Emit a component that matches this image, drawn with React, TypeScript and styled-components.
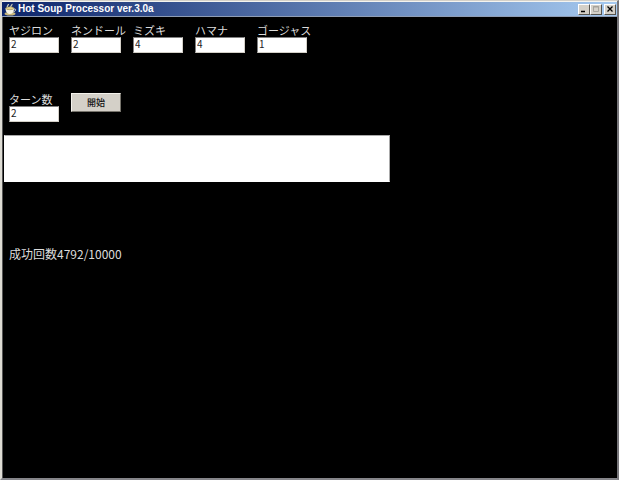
import React, { useState } from "react";
import styled, { createGlobalStyle } from "styled-components";

const GlobalStyle = createGlobalStyle`
  * { box-sizing: border-box; }
  body { margin: 0; background: #000; }
  button, input, textarea { font-family: inherit; margin: 0; }
`;

const Frame = styled.div`
  min-height: 100vh;
  display: flex;
  flex-direction: column;
  background: #000;
  border-style: solid;
  border-width: 1px 2px 2px 2px;
  border-color: #d4d0c8 #77767a #85858a #dedcd4;
  font-family: "Noto Sans CJK JP", "Liberation Sans", sans-serif;
  color: #dcdcdc;
`;

const TitleBar = styled.header`
  display: flex;
  align-items: center;
  height: 16px;
  padding: 0 1px 0 2px;
  gap: 1px;
  border-top: 1px solid #f4f4f0;
  border-bottom: 1px solid #8f9db4;
  background: linear-gradient(to right, #0c246a, #a6caf0);
`;

const Title = styled.h1`
  flex: 1;
  margin: 0;
  color: #fff;
  font: bold 10px/14px "Liberation Sans", sans-serif;
  white-space: nowrap;
`;

const Controls = styled.div`
  display: flex;
`;

const ControlButton = styled.button<{ $apart?: boolean }>`
  display: grid;
  place-items: center;
  width: 12px;
  height: 11px;
  padding: 0;
  margin-left: ${(p) => (p.$apart ? 2 : 0)}px;
  border: 1px solid;
  border-color: #fff #55534e #55534e #fff;
  background: #d4d0c8;
`;

const Body = styled.main`
  flex: 1;
  display: flex;
  flex-direction: column;
  align-items: flex-start;
  border-left: 1px solid #555;
`;

const Row = styled.div<{ $top: number }>`
  display: flex;
  align-items: flex-start;
  gap: 12px;
  padding: ${(p) => p.$top}px 6px 0;
`;

const Field = styled.label`
  display: flex;
  flex-direction: column;
  width: 50px;
  font-size: 11px;
  line-height: 13px;
  white-space: nowrap;
`;

const NumberBox = styled.input`
  width: 100%;
  height: 16px;
  padding: 0 0 3px 1px;
  border: 1px solid;
  border-color: #808080 #d4d0c8 #d4d0c8 #808080;
  background: #fff;
  color: #222;
  font-size: 10px;
  line-height: 11px;
  outline: none;
`;

const StartButton = styled.button`
  width: 50px;
  height: 19px;
  padding: 0;
  border: 1px solid;
  border-color: #f4f2ec #77746c #77746c #f4f2ec;
  background: #d4d0c8;
  color: #111;
  font-size: 9px;
  font-weight: 500;
  line-height: 15px;
`;

const Output = styled.textarea`
  display: block;
  width: 386px;
  max-width: 100%;
  height: 47px;
  margin: 13px 0 0 1px;
  padding: 2px;
  border: 1px solid;
  border-color: #aaa #aaa #fff #fff;
  background: #fff;
  resize: none;
  outline: none;
`;

const Result = styled.p`
  margin: 64px 0 0;
  padding: 0 6px;
  font-size: 12px;
  line-height: 16px;
`;

const CupIcon = () => (
  <svg width="13" height="13" viewBox="0 0 13 13" aria-hidden="true">
    <ellipse cx="6" cy="10.800" rx="5.500" ry="1.800" fill="#c9b77b" />
    <path d="M1.500 5h8.500c0 3-1 6-4 6S1.500 8.500 1.500 5z" fill="#f5f2e4" />
    <path d="M9.300 6h1.700c1 0 .8 2.800-2.400 3" fill="none" stroke="#eee8d0" />
    <ellipse cx="5.800" cy="5.200" rx="4" ry="1.500" fill="#e3d48f" stroke="#8c7c43" strokeWidth=".5" />
    <path d="M3.500 4c-1-1.500 1-1.500 1-3M7 4c-1-1.500 1.500-1.500 1-3" fill="none" stroke="#c8ccb8" strokeWidth="1.300" />
  </svg>
);

const fieldData = [
  ["ヤジロン", "2"],
  ["ネンドール", "2"],
  ["ミズキ", "4"],
  ["ハマナ", "4"],
  ["ゴージャス", "1"],
];

function LabeledNumber({ label, initial }: { label: string; initial: string }) {
  const [value, setValue] = useState(initial);
  return (
    <Field>
      {label}
      <NumberBox type="text" value={value} onChange={(e) => setValue(e.target.value)} />
    </Field>
  );
}

export default function App() {
  return (
    <>
      <GlobalStyle />
      <Frame>
        <TitleBar>
          <CupIcon />
          <Title>Hot Soup Processor ver.3.0a</Title>
          <Controls>
            <ControlButton aria-label="Minimize">
              <svg width="8" height="8"><path d="M1 6.500h4" stroke="#000" strokeWidth="1.500" /></svg>
            </ControlButton>
            <ControlButton aria-label="Maximize" disabled>
              <svg width="8" height="8"><path d="M1.500 1.500h5v5h-5zM1 2h6" fill="none" stroke="#a5a29b" /></svg>
            </ControlButton>
            <ControlButton aria-label="Close" $apart>
              <svg width="8" height="8"><path d="M1.500 1.500l5 5M6.500 1.500l-5 5" stroke="#000" strokeWidth="1.300" /></svg>
            </ControlButton>
          </Controls>
        </TitleBar>
        <Body>
          <Row $top={7}>
            {fieldData.map(([label, initial]) => (
              <LabeledNumber key={label} label={label} initial={initial} />
            ))}
          </Row>
          <Row $top={40}>
            <LabeledNumber label="ターン数" initial="2" />
            <StartButton type="button">開始</StartButton>
          </Row>
          <Output aria-label="出力" readOnly />
          <Result>成功回数4792/10000</Result>
        </Body>
      </Frame>
    </>
  );
}
